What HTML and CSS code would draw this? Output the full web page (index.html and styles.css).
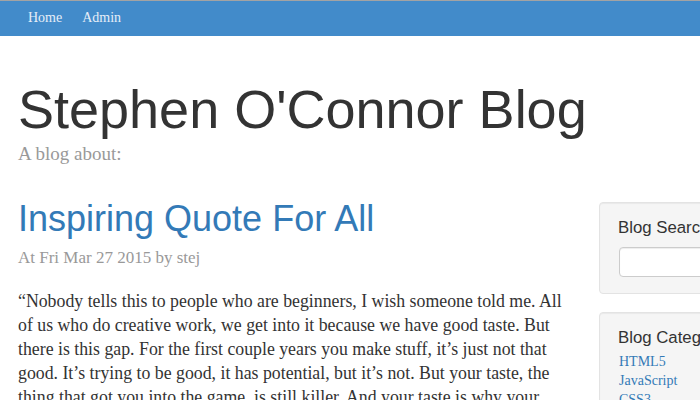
FILE: index.html
```html
<!DOCTYPE html>
<html lang="en">
<head>
<meta charset="utf-8">
<title>Stephen O'Connor Blog</title>
<link rel="stylesheet" href="styles.css">
</head>
<body>
<nav class="navbar">
  <a class="nav-link" href="#">Home</a>
  <a class="nav-link" href="#">Admin</a>
</nav>
<div class="container">
  <header class="site-header">
    <h1 class="site-title">Stephen O'Connor Blog</h1>
    <p class="tagline">A blog about:</p>
  </header>
  <div class="row">
    <main class="main-col">
      <h2 class="post-title"><a href="#">Inspiring Quote For All</a></h2>
      <p class="post-meta">At Fri Mar 27 2015 by stej</p>
      <p class="post-body">“Nobody tells this to people who are beginners, I wish someone told me. All of us who do creative work, we get into it because we have good taste. But there is this gap. For the first couple years you make stuff, it’s just not that good. It’s trying to be good, it has potential, but it’s not. But your taste, the thing that got you into the game, is still killer. And your taste is why your work disappoints you. A lot of people never get past this phase, they quit.”</p>
    </main>
    <aside class="sidebar">
      <div class="well">
        <h4 class="well-title">Blog Search</h4>
        <input class="search-input" type="text">
      </div>
      <div class="well">
        <h4 class="well-title cat-title">Blog Categories</h4>
        <ul class="cat-list">
          <li><a href="#">HTML5</a></li>
          <li><a href="#">JavaScript</a></li>
          <li><a href="#">CSS3</a></li>
          <li><a href="#">Node.js</a></li>
        </ul>
      </div>
    </aside>
  </div>
</div>
</body>
</html>
```
FILE: styles.css
```css
html, body {
  margin: 0;
  padding: 0;
  overflow: hidden;
  background: #fff;
}
body {
  font-family: "Liberation Serif", "Times New Roman", serif;
  color: #333;
}
.navbar {
  height: 35px;
  border-top: 1px solid #a3a3a3;
  background: #428bca;
  display: flex;
  align-items: center;
  padding-left: 18px;
}
.nav-link {
  font-size: 14px;
  color: #e6eef8;
  text-decoration: none;
  padding: 0 10px;
  line-height: 20px;
  margin-top: -1px;
}
.container {
  padding-left: 18px;
  width: 900px;
}
.site-header {
  padding-top: 44px;
}
.site-title {
  margin: 0;
  font-family: "Liberation Sans", Arial, sans-serif;
  font-weight: normal;
  font-size: 54px;
  line-height: 1.1;
  color: #333;
}
.tagline {
  margin: 3px 0 0;
  font-size: 19px;
  line-height: 24px;
  color: #999;
}
.row {
  display: flex;
  gap: 30px;
  margin-top: 33px;
}
.main-col {
  width: 551px;
  flex: none;
}
.post-title {
  margin: 0;
  font-family: "Liberation Sans", Arial, sans-serif;
  font-weight: normal;
  font-size: 36px;
  line-height: 1.1;
}
.post-title a {
  color: #337ab7;
  text-decoration: none;
}
.post-meta {
  margin: 7px 0 0;
  font-size: 17px;
  line-height: 24px;
  color: #999;
}
.post-body {
  margin: 19px 0 0;
  font-size: 17.8px;
  line-height: 24px;
  color: #333;
}
.sidebar {
  width: 260px;
  flex: none;
  padding-top: 3px;
}
.well {
  background: #f5f5f5;
  border: 1px solid #e3e3e3;
  border-radius: 4px;
  padding: 15px 19px 16px;
  margin-bottom: 18px;
  box-shadow: inset 0 1px 1px rgba(0,0,0,0.05);
}
.well-title {
  margin: 0 0 9px -1px;
  font-family: "Liberation Sans", Arial, sans-serif;
  font-weight: normal;
  font-size: 16.8px;
  line-height: 20px;
  color: #333;
}
.cat-title {
  margin-bottom: 4px;
}
.search-input {
  display: block;
  box-sizing: border-box;
  width: 100%;
  height: 30px;
  border: 1px solid #ccc;
  border-radius: 4px;
  background: #fff;
  box-shadow: inset 0 1px 1px rgba(0,0,0,0.075);
  margin: 0;
}
.cat-list {
  list-style: none;
  margin: 0;
  padding: 0;
}
.cat-list li {
  font-size: 14px;
  line-height: 19px;
}
.cat-list a {
  color: #337ab7;
  text-decoration: none;
}
```
